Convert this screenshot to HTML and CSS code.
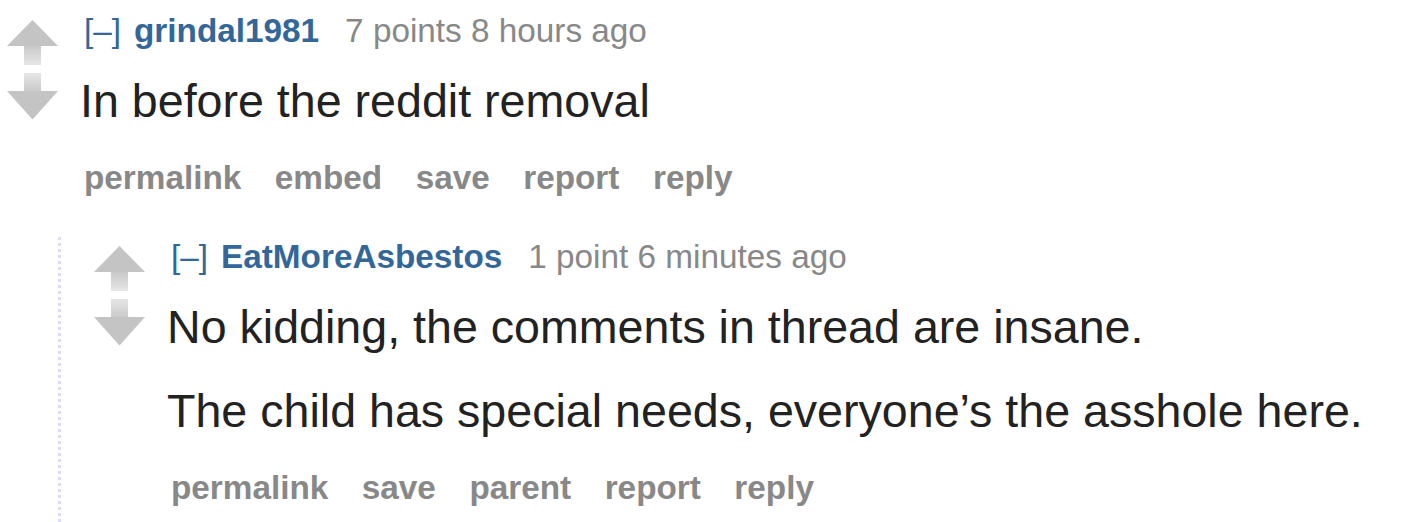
FILE: index.html
```html
<!DOCTYPE html>
<html lang="en">

<head>
    <meta charset="UTF-8">
    <title>Comments</title>
    <link rel="stylesheet" href="styles.css">
</head>

<body>
    <div class="comment">
        <div class="comment-row">
            <div class="midcol">
                <svg class="arrow" width="51" height="45" viewBox="0 0 51 45">
                    <defs>
                        <linearGradient id="stem-up" x1="0" y1="0" x2="0" y2="1">
                            <stop offset="0" stop-color="#c9c9c9" />
                            <stop offset="1" stop-color="#e6e6e6" />
                        </linearGradient>
                    </defs>
                    <polygon points="25.5,0 51,26 0,26" fill="#c4c4c4" />
                    <rect x="17" y="26" width="17" height="19" fill="url(#stem-up)" />
                </svg>
                <svg class="arrow" width="51" height="47" viewBox="0 0 51 47">
                    <defs>
                        <linearGradient id="stem-down" x1="0" y1="0" x2="0" y2="1">
                            <stop offset="0" stop-color="#e6e6e6" />
                            <stop offset="1" stop-color="#c9c9c9" />
                        </linearGradient>
                    </defs>
                    <rect x="17" y="0" width="17" height="19" fill="url(#stem-down)" />
                    <polygon points="0,18 51,18 25.5,46.5" fill="#c4c4c4" />
                </svg>
            </div>
            <div class="entry">
                <p class="tagline">
                    <span class="expand">[–]</span>
                    <span class="author">grindal1981</span>
                    <span class="score">7 points 8 hours ago</span>
                </p>
                <div class="md">
                    <p>In before the reddit removal</p>
                </div>
                <ul class="buttons">
                    <li>permalink</li>
                    <li>embed</li>
                    <li>save</li>
                    <li>report</li>
                    <li>reply</li>
                </ul>
            </div>
        </div>

        <div class="child">
            <div class="comment">
                <div class="comment-row">
                    <div class="midcol">
                        <svg class="arrow" width="51" height="45" viewBox="0 0 51 45">
                            <polygon points="25.5,0 51,26 0,26" fill="#c4c4c4" />
                            <rect x="17" y="26" width="17" height="19" fill="url(#stem-up)" />
                        </svg>
                        <svg class="arrow" width="51" height="47" viewBox="0 0 51 47">
                            <rect x="17" y="0" width="17" height="19" fill="url(#stem-down)" />
                            <polygon points="0,18 51,18 25.5,46.5" fill="#c4c4c4" />
                        </svg>
                    </div>
                    <div class="entry">
                        <p class="tagline">
                            <span class="expand">[–]</span>
                            <span class="author">EatMoreAsbestos</span>
                            <span class="score">1 point 6 minutes ago</span>
                        </p>
                        <div class="md">
                            <p>No kidding, the comments in thread are insane.</p>
                            <p>The child has special needs, everyone’s the asshole here.</p>
                        </div>
                        <ul class="buttons">
                            <li>permalink</li>
                            <li>save</li>
                            <li>parent</li>
                            <li>report</li>
                            <li>reply</li>
                        </ul>
                    </div>
                </div>
            </div>
        </div>
    </div>
</body>

</html>
```

FILE: styles.css
```css
html,
body {
    margin: 0;
    background: #ffffff;
    font-family: 'Liberation Sans', Arial, sans-serif;
    color: #222222;
}

body {
    padding: 11px 0 0 7px;
    overflow: hidden;
}

.comment-row {
    display: flex;
    align-items: flex-start;
}

.midcol {
    display: flex;
    flex-direction: column;
    gap: 8px;
    width: 51px;
    margin-top: 9px;
    margin-right: 22px;
}

.arrow {
    display: block;
}

.entry {
    flex: 1;
}

.tagline {
    display: flex;
    align-items: baseline;
    margin: 0;
    padding-left: 4px;
    font-size: 33.3px;
    line-height: 40px;
    color: #888888;
}

.expand {
    color: #369;
}

.author {
    margin: 0 26px 0 13px;
    font-weight: bold;
    color: #369;
}

.md p {
    margin: 28px 0 0;
    font-size: 46.6px;
    line-height: 56px;
    color: #222222;
}

.md p:first-child {
    margin-top: 22px;
}

.buttons {
    display: flex;
    gap: 33.5px;
    list-style: none;
    margin: 29px 0 0;
    padding: 0 0 0 4px;
    font-size: 33.3px;
    line-height: 40px;
    font-weight: bold;
    color: #888888;
}

/* dotted thread line on the left of replies */
.child {
    margin: 39px 0 0 51px;
    padding-left: 36px;
    padding-bottom: 20px;
    background-image: linear-gradient(#dcdcff 50%, transparent 50%);
    background-size: 3px 6px;
    background-repeat: repeat-y;
}
```
